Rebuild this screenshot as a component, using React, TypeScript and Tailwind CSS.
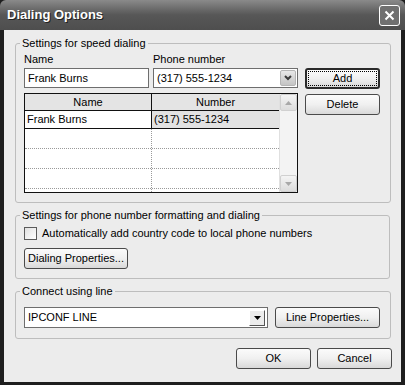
import React from "react";

const font = { fontFamily: '"Liberation Sans", Arial, sans-serif' };

function Btn({ children, w, def }: { children: React.ReactNode; w: string; def?: boolean }) {
  return (
    <div
      className={`${w} h-[21px] rounded-[3px] bg-gradient-to-b from-[#fbfbfb] via-[#f0f0f0] to-[#d9d9d9] flex items-center justify-center text-[11px] text-black ${
        def ? "border-2 border-[#2a2a2a] p-[1px]" : "border border-[#4a4a4a]"
      }`}
    >
      {def ? (
        <div className="w-full h-full border border-dotted border-black flex items-center justify-center">{children}</div>
      ) : (
        children
      )}
    </div>
  );
}

function Group({ title, children, className }: { title: string; children: React.ReactNode; className?: string }) {
  return (
    <fieldset className={`mx-[11px] border border-[#bdbdbd] rounded-[3px] pl-[8px] pr-[10px] m-0 ${className ?? ""}`}>
      <legend className="-ml-[4px] px-[2px] text-[11px] leading-[13px] text-black">{title}</legend>
      {children}
    </fieldset>
  );
}

function Chevron() {
  return (
    <div className="w-[16px] h-[16px] rounded-[2px] bg-gradient-to-b from-[#e8e8e8] to-[#c4c4c4] border border-[#b5b5b5] flex items-center justify-center">
      <svg width="8" height="6" viewBox="0 0 8 6">
        <path d="M1 1 L4 4 L7 1" stroke="#3a3a3a" strokeWidth="2" fill="none" />
      </svg>
    </div>
  );
}

function ScrollArrow({ up }: { up?: boolean }) {
  return (
    <div className="h-[17px] w-full bg-gradient-to-b from-[#f4f4f4] to-[#dcdcdc] border border-[#d0d0d0] rounded-[2px] flex items-center justify-center">
      <svg width="7" height="4" viewBox="0 0 7 4">
        <path d={up ? "M0 4 L3.5 0 L7 4 Z" : "M0 0 L3.5 4 L7 0 Z"} fill="#a8a8a8" />
      </svg>
    </div>
  );
}

export default function App() {
  return (
    <div style={font} className="w-[405px] h-[385px] bg-[#1e1e1e] flex flex-col overflow-hidden">
      {/* title bar */}
      <div className="h-[30px] shrink-0 bg-gradient-to-b from-[#8a8a8a] via-[#575757] to-[#4e4e4e] rounded-t-[6px] flex items-center pl-[7px] pr-[5px]">
        <span className="text-white font-bold text-[13px] [text-shadow:1px_1px_0_#222] flex-1">Dialing Options</span>
        <div className="w-[21px] h-[21px] rounded-[3px] border border-white bg-[#707070] flex items-center justify-center">
          <svg width="11" height="11" viewBox="0 0 11 11">
            <path d="M1.5 1.5 L9.5 9.5 M9.5 1.5 L1.5 9.5" stroke="white" strokeWidth="2" />
          </svg>
        </div>
      </div>

      {/* body */}
      <div className="flex-1 mx-[4px] mb-[3px] bg-[#ececec] pt-[7px] text-black">
        <Group title="Settings for speed dialing" className="pb-[9px]">
          <div className="flex gap-[7px] pt-[3px]">
            <div className="w-[274px]">
              <div className="flex text-[11px] leading-[13px]">
                <span className="w-[129px]">Name</span>
                <span>Phone number</span>
              </div>
              <div className="flex gap-[4px] mt-[2px]">
                <div className="w-[125px] h-[20px] bg-white border border-[#6e6e6e] flex items-center px-[3px] text-[11px]">
                  Frank Burns
                </div>
                <div className="w-[145px] h-[20px] bg-white border border-[#6e6e6e] flex items-center pl-[3px] pr-[1px] text-[11px]">
                  <span className="flex-1">(317) 555-1234</span>
                  <Chevron />
                </div>
              </div>
              <div className="mt-[5px] h-[100px] border border-[#111] bg-white flex">
                <div className="flex-1 flex flex-col text-[11px]">
                  <div className="h-[17px] flex border-b border-[#111] bg-[#e4e4e4]">
                    <div className="w-[127px] border-r border-[#111] flex items-center justify-center">Name</div>
                    <div className="flex-1 flex items-center justify-center">Number</div>
                  </div>
                  <div className="h-[18px] flex border-b border-[#111]">
                    <div className="w-[127px] border-r border-[#111] flex items-center px-[2px]">Frank Burns</div>
                    <div className="flex-1 flex items-center px-[2px] bg-[#e2e2e2]">(317) 555-1234</div>
                  </div>
                  {[0, 1, 2].map((i) => (
                    <div key={i} className="h-[20px] flex border-b border-dotted border-[#9a9a9a]">
                      <div className="w-[127px] border-r border-dotted border-[#9a9a9a]" />
                      <div className="flex-1" />
                    </div>
                  ))}
                  <div className="flex-1 flex">
                    <div className="w-[127px] border-r border-dotted border-[#9a9a9a]" />
                  </div>
                </div>
                <div className="w-[18px] bg-[#f3f3f3] flex flex-col justify-between border-l border-[#e0e0e0]">
                  <ScrollArrow up />
                  <ScrollArrow />
                </div>
              </div>
            </div>
            <div className="flex flex-col gap-[5px] pt-[15px]">
              <Btn w="w-[75px]" def>Add</Btn>
              <Btn w="w-[75px]">Delete</Btn>
            </div>
          </div>
        </Group>

        <Group title="Settings for phone number formatting and dialing" className="mt-[6px] pb-[9px]">
          <div className="flex items-center gap-[5px] pt-[5px] text-[11px] leading-[13px]">
            <div className="w-[13px] h-[13px] border border-[#5a5a5a] bg-gradient-to-br from-[#e0e0e0] to-white" />
            <span>Automatically add country code to local phone numbers</span>
          </div>
          <div className="mt-[8px]">
            <Btn w="w-[104px]">Dialing Properties...</Btn>
          </div>
        </Group>

        <Group title="Connect using line" className="mt-[6px] pb-[10px]">
          <div className="flex gap-[7px] pt-[9px]">
            <div className="w-[244px] h-[21px] bg-white border border-[#6e6e6e] flex items-center pl-[3px] pr-[2px] text-[11px]">
              <span className="flex-1">IPCONF LINE</span>
              <div className="w-[16px] h-[16px] bg-[#ececec] border-t border-l border-white border-r border-b border-r-[#555] border-b-[#555] flex items-center justify-center">
                <svg width="7" height="4" viewBox="0 0 7 4">
                  <path d="M0 0 L3.5 4 L7 0 Z" fill="black" />
                </svg>
              </div>
            </div>
            <Btn w="w-[105px]">Line Properties...</Btn>
          </div>
        </Group>

        <div className="flex justify-end gap-[6px] pr-[9px] mt-[9px]">
          <Btn w="w-[75px]">OK</Btn>
          <Btn w="w-[75px]">Cancel</Btn>
        </div>
      </div>
    </div>
  );
}
